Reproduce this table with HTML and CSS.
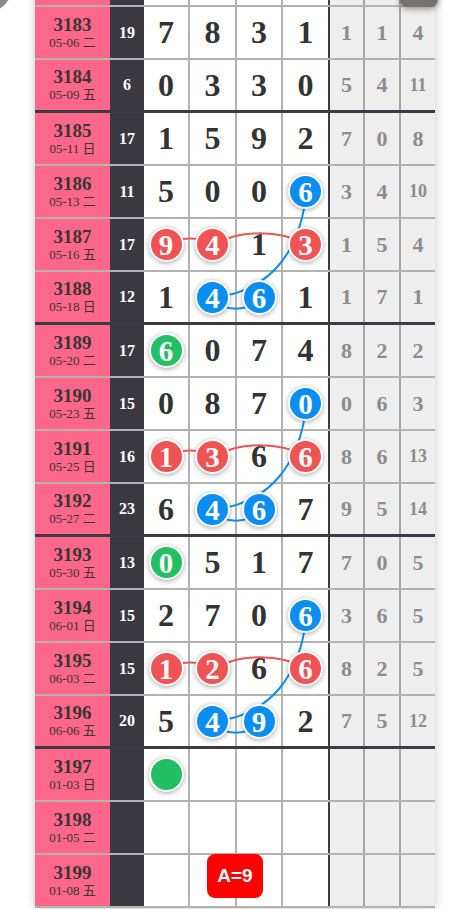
FILE: index.html
```html
<!DOCTYPE html>
<html lang="zh">
<head>
    <meta charset="UTF-8">
    <meta name="viewport" content="width=device-width, initial-scale=1.0">
    <title>走势图</title>
    <link rel="stylesheet" href="styles.css">
</head>
<body>
    <div class="fab-left"></div>
    <div class="fab-right"></div>

    <div class="board">
        <!-- previous row, scrolled out of view -->
        <div class="row">
            <div class="qi"></div><div class="he"></div>
            <div class="d"></div><div class="d"></div><div class="d"></div><div class="d d4"></div>
            <div class="g"></div><div class="g"></div><div class="g"></div>
        </div>
        <div class="row">
            <div class="qi"><b>3183</b><span>05-06 二</span></div><div class="he">19</div>
            <div class="d">7</div><div class="d">8</div><div class="d">3</div><div class="d d4">1</div>
            <div class="g">1</div><div class="g">1</div><div class="g">4</div>
        </div>
        <div class="row end">
            <div class="qi"><b>3184</b><span>05-09 五</span></div><div class="he">6</div>
            <div class="d">0</div><div class="d">3</div><div class="d">3</div><div class="d d4">0</div>
            <div class="g">5</div><div class="g">4</div><div class="g sm">11</div>
        </div>

        <div class="row">
            <div class="qi"><b>3185</b><span>05-11 日</span></div><div class="he">17</div>
            <div class="d">1</div><div class="d">5</div><div class="d">9</div><div class="d d4">2</div>
            <div class="g">7</div><div class="g">0</div><div class="g">8</div>
        </div>
        <div class="row">
            <div class="qi"><b>3186</b><span>05-13 二</span></div><div class="he">11</div>
            <div class="d">5</div><div class="d">0</div><div class="d">0</div><div class="d d4"><i class="ball blue">6</i></div>
            <div class="g">3</div><div class="g">4</div><div class="g sm">10</div>
        </div>
        <div class="row">
            <div class="qi"><b>3187</b><span>05-16 五</span></div><div class="he">17</div>
            <div class="d"><i class="ball red">9</i></div><div class="d"><i class="ball red">4</i></div><div class="d">1</div><div class="d d4"><i class="ball red">3</i></div>
            <div class="g">1</div><div class="g">5</div><div class="g">4</div>
        </div>
        <div class="row end">
            <div class="qi"><b>3188</b><span>05-18 日</span></div><div class="he">12</div>
            <div class="d">1</div><div class="d"><i class="ball blue">4</i></div><div class="d"><i class="ball blue">6</i></div><div class="d d4">1</div>
            <div class="g">1</div><div class="g">7</div><div class="g">1</div>
        </div>

        <div class="row">
            <div class="qi"><b>3189</b><span>05-20 二</span></div><div class="he">17</div>
            <div class="d"><i class="ball green">6</i></div><div class="d">0</div><div class="d">7</div><div class="d d4">4</div>
            <div class="g">8</div><div class="g">2</div><div class="g">2</div>
        </div>
        <div class="row">
            <div class="qi"><b>3190</b><span>05-23 五</span></div><div class="he">15</div>
            <div class="d">0</div><div class="d">8</div><div class="d">7</div><div class="d d4"><i class="ball blue">0</i></div>
            <div class="g">0</div><div class="g">6</div><div class="g">3</div>
        </div>
        <div class="row">
            <div class="qi"><b>3191</b><span>05-25 日</span></div><div class="he">16</div>
            <div class="d"><i class="ball red">1</i></div><div class="d"><i class="ball red">3</i></div><div class="d">6</div><div class="d d4"><i class="ball red">6</i></div>
            <div class="g">8</div><div class="g">6</div><div class="g sm">13</div>
        </div>
        <div class="row end">
            <div class="qi"><b>3192</b><span>05-27 二</span></div><div class="he">23</div>
            <div class="d">6</div><div class="d"><i class="ball blue">4</i></div><div class="d"><i class="ball blue">6</i></div><div class="d d4">7</div>
            <div class="g">9</div><div class="g">5</div><div class="g sm">14</div>
        </div>

        <div class="row">
            <div class="qi"><b>3193</b><span>05-30 五</span></div><div class="he">13</div>
            <div class="d"><i class="ball green">0</i></div><div class="d">5</div><div class="d">1</div><div class="d d4">7</div>
            <div class="g">7</div><div class="g">0</div><div class="g">5</div>
        </div>
        <div class="row">
            <div class="qi"><b>3194</b><span>06-01 日</span></div><div class="he">15</div>
            <div class="d">2</div><div class="d">7</div><div class="d">0</div><div class="d d4"><i class="ball blue">6</i></div>
            <div class="g">3</div><div class="g">6</div><div class="g">5</div>
        </div>
        <div class="row">
            <div class="qi"><b>3195</b><span>06-03 二</span></div><div class="he">15</div>
            <div class="d"><i class="ball red">1</i></div><div class="d"><i class="ball red">2</i></div><div class="d">6</div><div class="d d4"><i class="ball red">6</i></div>
            <div class="g">8</div><div class="g">2</div><div class="g">5</div>
        </div>
        <div class="row end">
            <div class="qi"><b>3196</b><span>06-06 五</span></div><div class="he">20</div>
            <div class="d">5</div><div class="d"><i class="ball blue">4</i></div><div class="d"><i class="ball blue">9</i></div><div class="d d4">2</div>
            <div class="g">7</div><div class="g">5</div><div class="g sm">12</div>
        </div>

        <div class="row">
            <div class="qi"><b>3197</b><span>01-03 日</span></div><div class="he"></div>
            <div class="d"><i class="ball green"></i></div><div class="d"></div><div class="d"></div><div class="d d4"></div>
            <div class="g"></div><div class="g"></div><div class="g"></div>
        </div>
        <div class="row">
            <div class="qi"><b>3198</b><span>01-05 二</span></div><div class="he"></div>
            <div class="d"></div><div class="d"></div><div class="d"></div><div class="d d4"></div>
            <div class="g"></div><div class="g"></div><div class="g"></div>
        </div>
        <div class="row">
            <div class="qi"><b>3199</b><span>01-08 五</span></div><div class="he"></div>
            <div class="d"></div><div class="d"></div><div class="d"></div><div class="d d4"></div>
            <div class="g"></div><div class="g"></div><div class="g"></div>
        </div>

        <!-- connecting lines between the balls -->
        <svg class="lines" width="400" height="954" viewBox="0 0 400 954">
            <g id="pair">
                <path class="ln-blue" d="M271.5,237.5 C265.5,297.5 235.5,337.5 178.5,343.5"/>
                <path class="ln-blue" d="M178.5,343.5 C185.5,358.5 215.5,358.5 225,343.5"/>
                <path class="ln-red" d="M132,290.5 C146,282.5 165,282.5 178.5,290.5"/>
                <path class="ln-red" d="M178.5,290.5 C205,275.5 245,275.5 271.5,290.5"/>
            </g>
            <use href="#pair" y="212"/>
            <use href="#pair" y="424"/>
        </svg>

        <div class="tag">A=9</div>
    </div>
</body>
</html>
```

FILE: styles.css
```css
body {
    margin: 0;
    padding: 0;
    background-color: #fff;
    font-family: "Liberation Serif", "Noto Sans CJK SC", serif;
    overflow: hidden;
    height: 909px;
    position: relative;
}

.fab-left {
    position: absolute;
    left: -50px;
    top: -50px;
    width: 64px;
    height: 64px;
    border-radius: 50%;
    background-color: #8a8a8a;
    z-index: 5;
}
.fab-right {
    position: absolute;
    left: 400px;
    top: -30px;
    width: 38px;
    height: 37px;
    border-radius: 8px;
    background-color: #75716f;
    box-shadow: 0 2px 6px rgba(0, 0, 0, 0.4);
    z-index: 5;
}

.board {
    position: relative;
    width: 400px;
    margin: -46px 0 0 35px;
    box-shadow: 0 0 10px rgba(0, 0, 0, 0.22);
}

.row {
    display: grid;
    grid-template-columns: 75px 34px 46px 47px 46px 47px 35px 36px 34px;
    height: 53px;
    box-sizing: border-box;
    border-bottom: 2px solid rgba(0, 0, 0, 0.3);
}
.row.end {
    border-bottom: 3px solid #3c3b41;
}
.row > div {
    display: flex;
    align-items: center;
    justify-content: center;
    box-sizing: border-box;
}

.qi {
    background-color: #fe668a;
    color: #3a3438;
    flex-direction: column;
}
.qi b {
    font-size: 19px;
    line-height: 20px;
}
.qi span {
    font-size: 13px;
    line-height: 16px;
}

.he {
    background-color: #3a393f;
    color: #fff;
    font-weight: bold;
    font-size: 16px;
}

.d {
    background-color: #fff;
    color: #333;
    font-weight: bold;
    font-size: 32px;
    border-right: 2px solid rgba(0, 0, 0, 0.3);
}
.d.d4 {
    border-right: 2px solid #3c3b41;
}

.g {
    background-color: #eee;
    color: #8c8c8c;
    font-weight: bold;
    font-size: 22px;
    border-right: 2px solid rgba(0, 0, 0, 0.3);
}
.g:last-child {
    border-right: none;
}
.g.sm {
    font-size: 18px;
}

.ball {
    position: relative;
    z-index: 2;
    width: 31px;
    height: 31px;
    border: 2px solid #fff;
    border-radius: 50%;
    box-shadow: 0 1px 5px rgba(0, 0, 0, 0.35);
    color: #fff;
    font-style: normal;
    font-size: 29px;
    line-height: 32px;
    text-align: center;
}
.red { background-color: #f05353; }
.blue { background-color: #0a8ef2; }
.green { background-color: #22bf63; }

.lines {
    position: absolute;
    left: 0;
    top: 0;
    z-index: 1;
    pointer-events: none;
}
.ln-red,
.ln-blue {
    fill: none;
    stroke-width: 2;
}
.ln-red { stroke: #f05353; }
.ln-blue { stroke: #0a8ef2; }

.tag {
    position: absolute;
    left: 172px;
    top: 900px;
    width: 56px;
    height: 44px;
    border-radius: 8px;
    background-color: #ff0000;
    color: #fff;
    font-family: "Liberation Sans", Arial, sans-serif;
    font-weight: bold;
    font-size: 19px;
    line-height: 44px;
    text-align: center;
    z-index: 3;
}
```
